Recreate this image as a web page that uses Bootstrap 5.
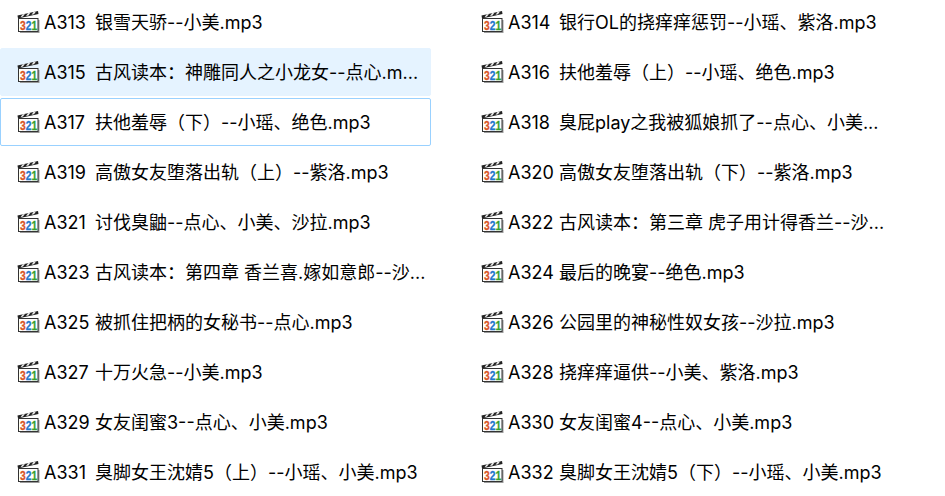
<!DOCTYPE html>
<html lang="zh-CN">
<head>
  <meta charset="UTF-8">
  <meta name="viewport" content="width=device-width, initial-scale=1.0">
  <title>文件列表</title>
  <link href="https://cdn.jsdelivr.net/npm/bootstrap@5.3.0/dist/css/bootstrap.min.css" rel="stylesheet">
  <style>
    body {
      background: #fff;
      overflow: hidden;
      font-family: Inter, "Noto Sans CJK SC", sans-serif;
    }
    .file-grid {
      display: grid;
      grid-template-columns: 431px 431px;
      column-gap: 33px;
      row-gap: 2px;
      margin-top: -2px;
    }
    .file-item {
      height: 48px;
      padding: 0 0 0 16px;
      border: 1px solid transparent;
      border-radius: 2px;
      color: #000;
      font-size: 18px;
    }
    .file-item.hovered { background: #e5f3ff; border-color: #e5f3ff; }
    .file-item.focused { border-color: #99d1ff; }
    .file-icon { width: 24px; height: 24px; margin-right: 3px; flex: none; }
    .file-code { display: inline-block; width: 51px; }
    .file-name { white-space: nowrap; }
  </style>
</head>
<body>

<div class="file-grid" id="file-list"></div>

<script src="https://cdn.jsdelivr.net/npm/bootstrap@5.3.0/dist/js/bootstrap.bundle.min.js"></script>
<script>
  const files = [
    ['A313', '银雪天骄--小美.mp3'],
    ['A314', '银行OL的挠痒痒惩罚--小瑶、紫洛.mp3'],
    ['A315', '古风读本：神雕同人之小龙女--点心.m...'],
    ['A316', '扶他羞辱（上）--小瑶、绝色.mp3'],
    ['A317', '扶他羞辱（下）--小瑶、绝色.mp3'],
    ['A318', '臭屁play之我被狐娘抓了--点心、小美...'],
    ['A319', '高傲女友堕落出轨（上）--紫洛.mp3'],
    ['A320', '高傲女友堕落出轨（下）--紫洛.mp3'],
    ['A321', '讨伐臭鼬--点心、小美、沙拉.mp3'],
    ['A322', '古风读本：第三章 虎子用计得香兰--沙...'],
    ['A323', '古风读本：第四章 香兰喜.嫁如意郎--沙...'],
    ['A324', '最后的晚宴--绝色.mp3'],
    ['A325', '被抓住把柄的女秘书--点心.mp3'],
    ['A326', '公园里的神秘性奴女孩--沙拉.mp3'],
    ['A327', '十万火急--小美.mp3'],
    ['A328', '挠痒痒逼供--小美、紫洛.mp3'],
    ['A329', '女友闺蜜3--点心、小美.mp3'],
    ['A330', '女友闺蜜4--点心、小美.mp3'],
    ['A331', '臭脚女王沈婧5（上）--小瑶、小美.mp3'],
    ['A332', '臭脚女王沈婧5（下）--小瑶、小美.mp3']
  ];

  // clapperboard icon
  const icon = `
    <svg class="file-icon" viewBox="0 0 24 24">
      <path d="M1 8.5 L21.5 4 L21 1 L0.5 5.5 Z" fill="#222"/>
      <path d="M3.5 7.2 L5.5 4.4 L8 3.8 L6 6.6 Z M9 6 L11 3.2 L13.5 2.6 L11.5 5.4 Z M14.5 4.8 L16.5 2 L19 1.4 L17 4.2 Z" fill="#eee"/>
      <rect x="3" y="10" width="19.5" height="13" fill="#9a9a9a"/>
      <rect x="1.5" y="8.5" width="19.5" height="13" fill="#fff" stroke="#333"/>
      <g transform="translate(3 20) scale(.82 1)" font-family="Liberation Sans" font-weight="700" font-size="12.5" stroke-width=".3">
        <text x="0" fill="#d9541e" stroke="#d9541e">3</text>
        <text x="7" fill="#2277cc" stroke="#2277cc">2</text>
        <text x="14" fill="#35a02d" stroke="#35a02d">1</text>
      </g>
    </svg>`;

  let listHtml = '';
  files.forEach(([code, name], index) => {
    let state = index === 2 ? ' hovered' : index === 4 ? ' focused' : '';
    listHtml += `<div class="file-item${state} d-flex align-items-center">${icon}<span class="file-name"><span class="file-code">${code}</span>${name}</span></div>`;
  });
  document.getElementById('file-list').innerHTML = listHtml;
</script>
</body>
</html>
